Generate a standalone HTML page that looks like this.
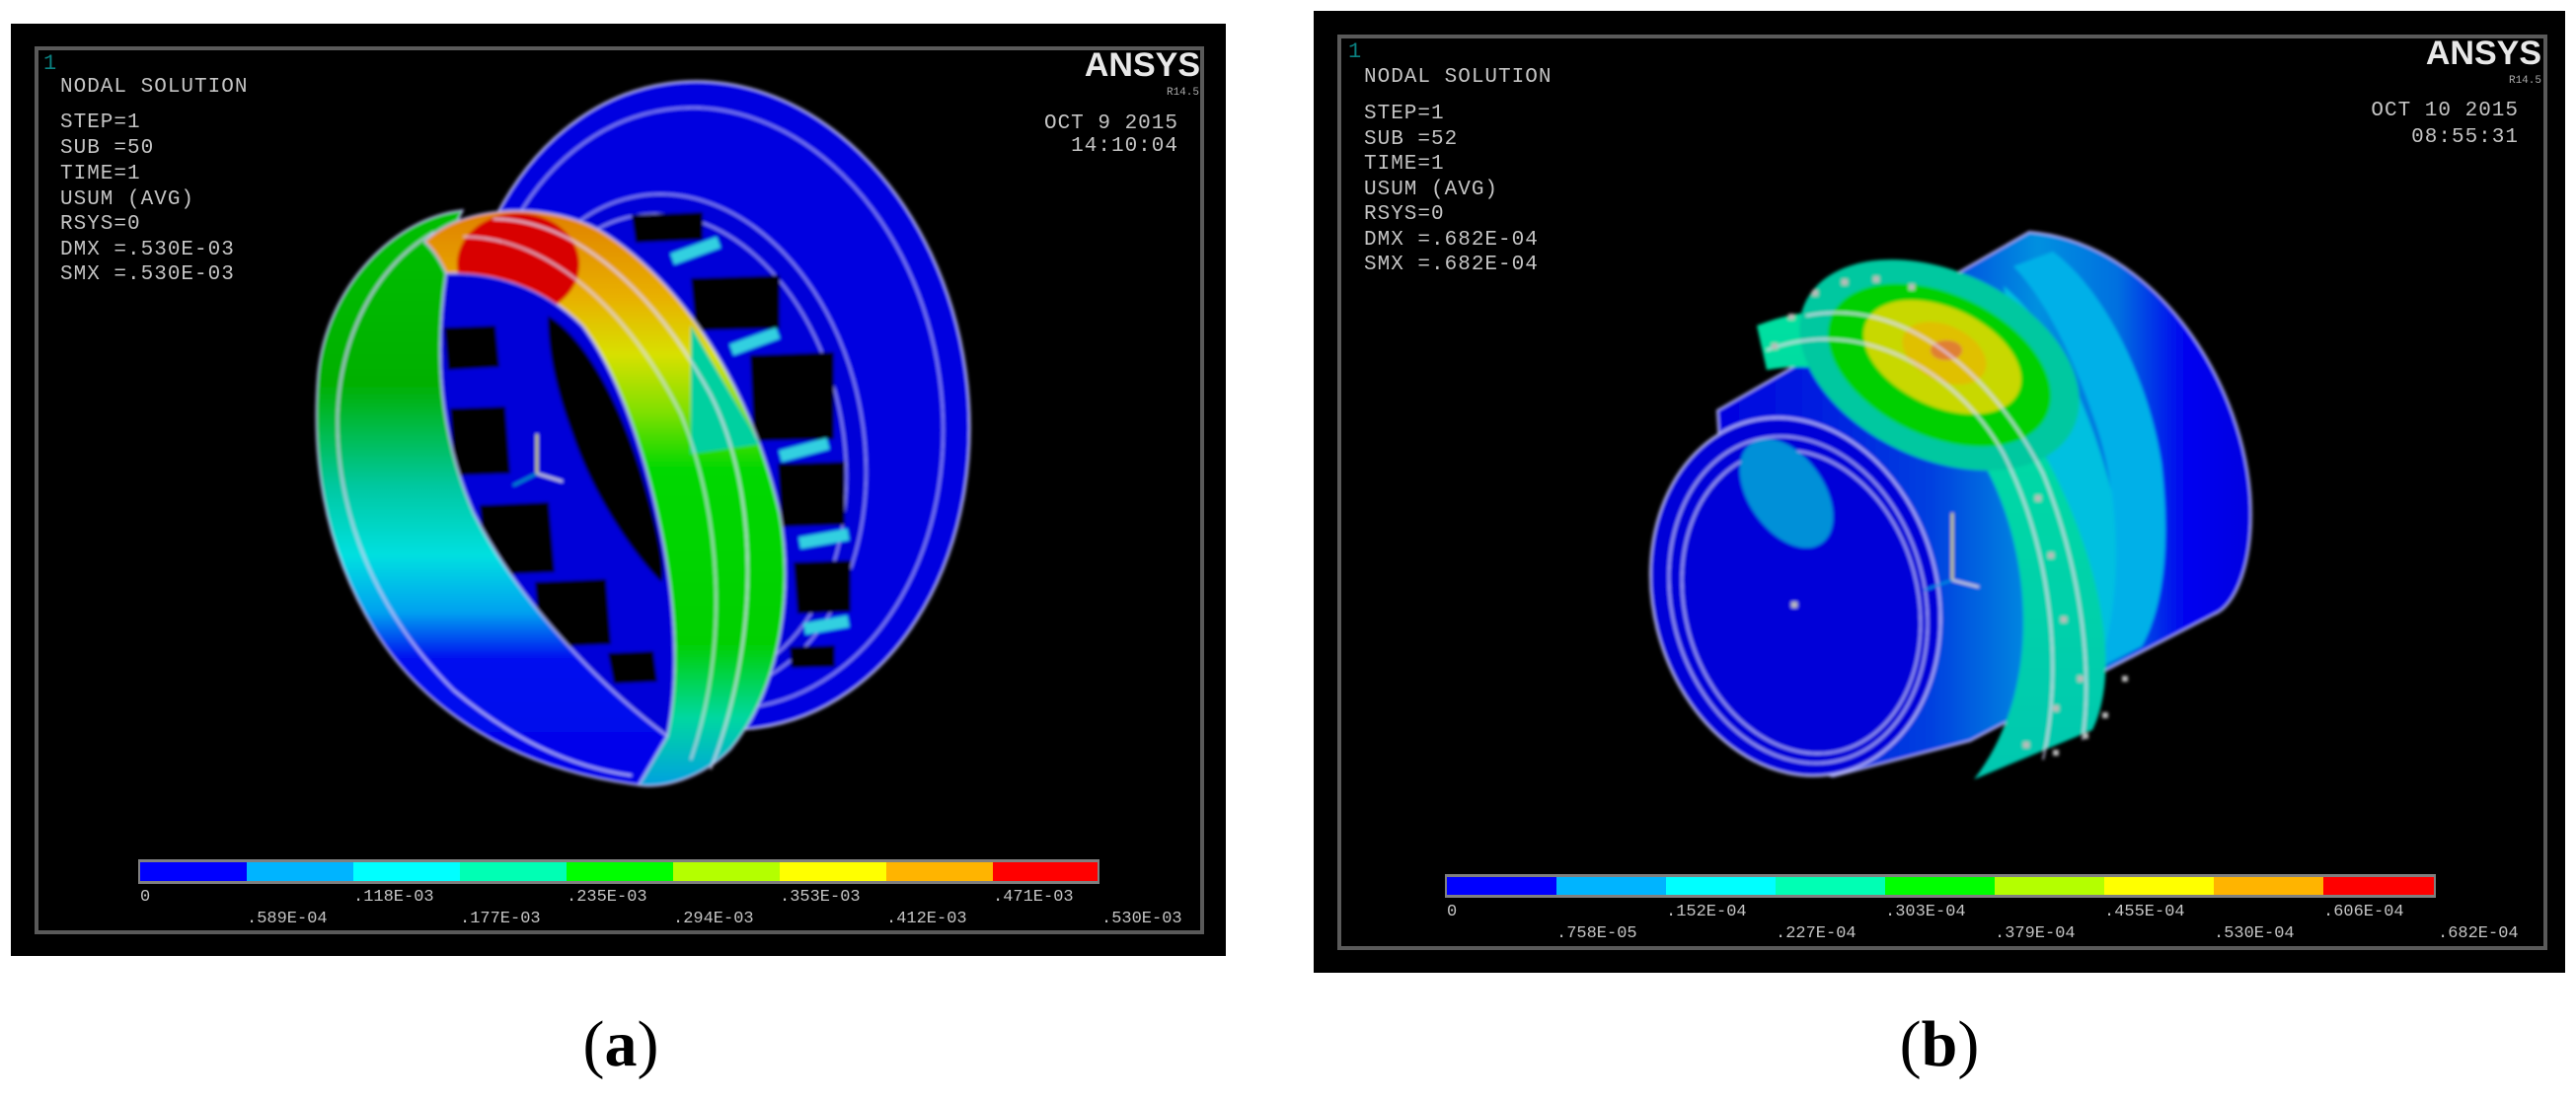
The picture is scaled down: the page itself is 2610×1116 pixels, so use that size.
<!DOCTYPE html>
<html><head><meta charset="utf-8">
<style>
html,body{margin:0;padding:0;background:#fff;}
body{width:2610px;height:1116px;overflow:hidden;position:relative;}
svg{position:absolute;left:0;top:0;}
.t{font-family:"Liberation Mono",monospace;font-size:21px;fill:#c4c4c4;letter-spacing:1px;}
.s{font-family:"Liberation Mono",monospace;font-size:17px;fill:#c4c4c4;}
.an{font-family:"Liberation Sans",sans-serif;font-weight:bold;font-size:34px;fill:#e8e8e8;}
.lab{font-family:"Liberation Serif",serif;font-size:66px;fill:#000;}
</style></head><body>
<svg width="2610" height="1116" viewBox="0 0 2610 1116" xmlns="http://www.w3.org/2000/svg">
<defs>
<filter id="bl"><feGaussianBlur stdDeviation="1.5"/></filter>
<linearGradient id="leftg" x1="0" y1="0" x2="0" y2="1">
<stop offset="0" stop-color="#00c000"/><stop offset="0.3" stop-color="#00b000"/>
<stop offset="0.48" stop-color="#00c8a0"/><stop offset="0.6" stop-color="#00e0e0"/>
<stop offset="0.7" stop-color="#00a0f0"/><stop offset="0.78" stop-color="#0010f0"/><stop offset="1" stop-color="#0000e8"/>
</linearGradient>
<linearGradient id="bandg" x1="0" y1="0" x2="0" y2="1">
<stop offset="0" stop-color="#e08000"/><stop offset="0.15" stop-color="#e8b000"/>
<stop offset="0.25" stop-color="#d8e000"/><stop offset="0.35" stop-color="#80e000"/>
<stop offset="0.45" stop-color="#00d800"/><stop offset="0.75" stop-color="#00d000"/>
<stop offset="0.88" stop-color="#00d8a0"/><stop offset="1" stop-color="#00a0e0"/>
</linearGradient>
<clipPath id="bandclip"><path d="M430,245 C470,205 560,205 610,235 C690,285 760,390 790,520 C805,600 790,700 740,760 C710,790 670,800 647,796 L676,746 C690,680 682,600 670,540 C650,440 620,370 590,330 C550,290 500,275 452,277 Z"/></clipPath>
<linearGradient id="bodyb" x1="0" y1="0" x2="1" y2="0">
<stop offset="0" stop-color="#0000e0"/><stop offset="0.4" stop-color="#0040e0"/>
<stop offset="0.6" stop-color="#0090e0"/><stop offset="0.75" stop-color="#0070e0"/>
<stop offset="0.88" stop-color="#0000f0"/><stop offset="1" stop-color="#0000e0"/>
</linearGradient>
<linearGradient id="ringb" x1="0" y1="0" x2="0" y2="1">
<stop offset="0" stop-color="#00e0a0"/><stop offset="1" stop-color="#00c8b0"/>
</linearGradient>
</defs>

<!-- Panel A -->
<rect x="11" y="24" width="1231" height="945" fill="#000"/>
<rect x="37" y="49" width="1181" height="896" fill="none" stroke="#5a5a5a" stroke-width="4"/>
<text x="44" y="70" style="font-family:'Liberation Mono',monospace;font-size:22px;fill:#0a8080">1</text>
<text class="t" x="61" y="93">NODAL SOLUTION</text>
<text class="t" x="61" y="129">STEP=1</text>
<text class="t" x="61" y="155">SUB =50</text>
<text class="t" x="61" y="181">TIME=1</text>
<text class="t" x="61" y="207">USUM     (AVG)</text>
<text class="t" x="61" y="232">RSYS=0</text>
<text class="t" x="61" y="258">DMX =.530E-03</text>
<text class="t" x="61" y="283">SMX =.530E-03</text>
<text class="an" x="1216" y="77" text-anchor="end">ANSYS</text>
<text x="1215" y="96" text-anchor="end" style="font-family:'Liberation Mono',monospace;font-size:11px;fill:#aaa">R14.5</text>
<text class="t" x="1194" y="130" text-anchor="end">OCT  9 2015</text>
<text class="t" x="1194" y="153" text-anchor="end">14:10:04</text>

<g filter="url(#bl)">
<ellipse cx="723" cy="411" rx="258" ry="330" transform="rotate(-8 723 411)" fill="#0000e0" stroke="#b8b8ff" stroke-width="2"/>
<ellipse cx="718" cy="414" rx="236" ry="306" transform="rotate(-8 718 414)" fill="none" stroke="#a0a0ff" stroke-width="1.5"/>
<ellipse cx="690" cy="450" rx="185" ry="255" transform="rotate(-10 690 450)" fill="#0000d8" stroke="#a0a0ff" stroke-width="1.5"/>
<ellipse cx="685" cy="455" rx="170" ry="240" transform="rotate(-10 685 455)" fill="none" stroke="#a0a0ff" stroke-width="1.5"/>
<g fill="#000">
<polygon points="640,218 712,215 712,243 644,246"/>
<polygon points="700,282 790,279 790,333 705,335"/>
<polygon points="760,360 845,357 845,445 764,447"/>
<polygon points="788,470 856,468 856,532 792,534"/>
<polygon points="804,570 862,568 862,620 808,622"/>
<polygon points="800,656 846,654 846,676 802,677"/>
</g>
<g fill="#30d0e0">
<rect x="680" y="248" width="50" height="12" transform="rotate(-20 705 255)"/>
<rect x="740" y="340" width="50" height="12" transform="rotate(-20 765 347)"/>
<rect x="790" y="450" width="50" height="12" transform="rotate(-15 815 457)"/>
<rect x="810" y="540" width="50" height="12" transform="rotate(-10 835 547)"/>
<rect x="815" y="628" width="45" height="12" transform="rotate(-10 835 635)"/>
</g>
<path d="M452,277 C500,275 550,290 590,330 C620,370 650,440 670,540 C682,600 690,680 676,746 C600,690 520,600 480,520 C445,440 440,360 452,277 Z" fill="#0000d8"/>
<path d="M555,320 C590,340 625,400 650,480 C668,540 675,580 670,590 C640,560 600,500 580,440 C565,400 555,360 555,320 Z" fill="#000"/>
<g fill="#000">
<polygon points="450,332 502,330 506,372 454,375"/>
<polygon points="456,414 512,412 517,480 461,482"/>
<polygon points="486,512 556,509 562,580 493,583"/>
<polygon points="542,590 614,587 619,653 548,656"/>
<polygon points="616,662 662,660 666,691 622,693"/>
</g>
<path d="M469,213 C400,220 330,290 322,380 C315,470 330,560 380,640 C430,720 520,780 647,796 L676,746 C600,690 520,600 480,520 C445,440 440,360 452,277 C455,250 460,230 469,213 Z" fill="url(#leftg)" stroke="#c0c0ff" stroke-width="1.5"/>
<path d="M440,235 C380,270 345,340 342,420 C340,520 380,620 460,700 C520,750 580,778 640,786" fill="none" stroke="#d0d0ff" stroke-width="1.5"/>
<path d="M430,245 C470,205 560,205 610,235 C690,285 760,390 790,520 C805,600 790,700 740,760 C710,790 670,800 647,796 L676,746 C690,680 682,600 670,540 C650,440 620,370 590,330 C550,290 500,275 452,277 C445,262 438,252 430,245 Z" fill="url(#bandg)" stroke="#c0c0ff" stroke-width="1.5"/>
<g clip-path="url(#bandclip)">
<ellipse cx="525" cy="268" rx="62" ry="52" fill="#d80000"/>
<path d="M700,330 L770,450 L700,460 Z" fill="#00d0a0"/>
</g>
<path d="M500,222 C580,222 660,290 720,400 C770,500 770,650 720,780" fill="none" stroke="#e0e0ff" stroke-width="1.5"/>
<path d="M470,240 C560,240 640,320 690,420 C730,520 740,650 700,770" fill="none" stroke="#e0e0ff" stroke-width="1.2"/>
<line x1="544" y1="480" x2="544" y2="440" stroke="#e0e000" stroke-width="2"/>
<line x1="544" y1="480" x2="570" y2="488" stroke="#ddd" stroke-width="2"/>
<line x1="544" y1="480" x2="520" y2="492" stroke="#00a0c0" stroke-width="2"/>
</g>

<rect x="140" y="871" width="974" height="25" fill="#808080"/>
<rect x="142" y="874" width="108" height="19" fill="#0000ff"/>
<rect x="250" y="874" width="108" height="19" fill="#00b4ff"/>
<rect x="358" y="874" width="108" height="19" fill="#00ffff"/>
<rect x="466" y="874" width="108" height="19" fill="#00ffb4"/>
<rect x="574" y="874" width="108" height="19" fill="#00ff00"/>
<rect x="682" y="874" width="108" height="19" fill="#b4ff00"/>
<rect x="790" y="874" width="108" height="19" fill="#ffff00"/>
<rect x="898" y="874" width="108" height="19" fill="#ffb400"/>
<rect x="1006" y="874" width="106" height="19" fill="#ff0000"/>
<text class="s" x="142" y="913">0</text>
<text class="s" x="250" y="935">.589E-04</text>
<text class="s" x="358" y="913">.118E-03</text>
<text class="s" x="466" y="935">.177E-03</text>
<text class="s" x="574" y="913">.235E-03</text>
<text class="s" x="682" y="935">.294E-03</text>
<text class="s" x="790" y="913">.353E-03</text>
<text class="s" x="898" y="935">.412E-03</text>
<text class="s" x="1006" y="913">.471E-03</text>
<text class="s" x="1116" y="935">.530E-03</text>

<!-- Panel B -->
<rect x="1331" y="11" width="1268" height="975" fill="#000"/>
<rect x="1357" y="37" width="1222" height="924" fill="none" stroke="#5a5a5a" stroke-width="4"/>
<text x="1366" y="58" style="font-family:'Liberation Mono',monospace;font-size:22px;fill:#0a8080">1</text>
<text class="t" x="1382" y="83">NODAL SOLUTION</text>
<text class="t" x="1382" y="120">STEP=1</text>
<text class="t" x="1382" y="146">SUB =52</text>
<text class="t" x="1382" y="171">TIME=1</text>
<text class="t" x="1382" y="197">USUM     (AVG)</text>
<text class="t" x="1382" y="222">RSYS=0</text>
<text class="t" x="1382" y="248">DMX =.682E-04</text>
<text class="t" x="1382" y="273">SMX =.682E-04</text>
<text class="an" x="2575" y="65" text-anchor="end">ANSYS</text>
<text x="2575" y="84" text-anchor="end" style="font-family:'Liberation Mono',monospace;font-size:11px;fill:#aaa">R14.5</text>
<text class="t" x="2552" y="117" text-anchor="end">OCT 10 2015</text>
<text class="t" x="2552" y="144" text-anchor="end">08:55:31</text>

<g filter="url(#bl)">
<path d="M1740,416 L2056,235 C2180,245 2270,380 2280,500 C2285,570 2265,615 2243,623 L1996,751 L1857,787 L1760,760 Z" fill="url(#bodyb)" stroke="#b0b0ff" stroke-width="2"/>
<path d="M2080,255 C2140,300 2180,400 2190,470 C2200,560 2190,620 2170,655 L2120,680 C2150,600 2150,500 2120,420 C2100,360 2070,300 2040,270 Z" fill="#00b0e8"/>
<path d="M2030,290 C2080,330 2120,420 2140,500 C2150,580 2140,650 2120,690 L2080,700 C2100,600 2090,500 2060,420 Z" fill="#00c0e0"/>
<path d="M1780,330 C1880,290 1990,330 2060,440 C2130,560 2150,680 2120,740 L2000,790 C2070,700 2060,560 2010,470 C1960,400 1870,360 1790,375 Z" fill="url(#ringb)"/>
<ellipse cx="1965" cy="370" rx="150" ry="95" transform="rotate(25 1965 370)" fill="#00c8a0"/>
<ellipse cx="1965" cy="370" rx="120" ry="72" transform="rotate(25 1965 370)" fill="#00d000"/>
<ellipse cx="1968" cy="362" rx="85" ry="50" transform="rotate(25 1968 362)" fill="#c8d800"/>
<ellipse cx="1970" cy="358" rx="45" ry="28" transform="rotate(25 1970 358)" fill="#e0c000"/>
<ellipse cx="1972" cy="355" rx="16" ry="10" fill="#e08030"/>
<path d="M1790,355 C1880,320 1980,370 2030,460 C2080,560 2090,680 2070,770" fill="none" stroke="#e0e0ff" stroke-width="1.5"/>
<path d="M1830,320 C1930,300 2020,380 2070,480 C2110,580 2120,680 2110,750" fill="none" stroke="#e0e0ff" stroke-width="1.5"/>
<ellipse cx="1819" cy="605" rx="144" ry="184" transform="rotate(-15 1819 605)" fill="#0000d8" stroke="#c0c0ff" stroke-width="2"/>
<ellipse cx="1822" cy="608" rx="128" ry="168" transform="rotate(-15 1822 608)" fill="none" stroke="#c0c0ff" stroke-width="1.5"/>
<ellipse cx="1825" cy="610" rx="118" ry="156" transform="rotate(-15 1825 610)" fill="none" stroke="#c0c0ff" stroke-width="1.5"/>
<ellipse cx="1810" cy="500" rx="38" ry="62" transform="rotate(-35 1810 500)" fill="#0090d8"/>
<line x1="1978" y1="588" x2="1978" y2="520" stroke="#e0e000" stroke-width="2"/>
<line x1="1978" y1="588" x2="2005" y2="595" stroke="#ddd" stroke-width="2"/>
<line x1="1978" y1="588" x2="1950" y2="598" stroke="#0090e0" stroke-width="2"/>
<g fill="#bbb">
<rect x="1795" y="348" width="6" height="6"/><rect x="1812" y="318" width="6" height="6"/>
<rect x="1836" y="294" width="6" height="6"/><rect x="1866" y="283" width="6" height="6"/>
<rect x="1898" y="280" width="6" height="6"/><rect x="1934" y="288" width="6" height="6"/>
<rect x="1815" y="610" width="6" height="6"/>
<rect x="2062" y="502" width="6" height="6"/><rect x="2075" y="560" width="6" height="6"/>
<rect x="2088" y="625" width="6" height="6"/><rect x="2105" y="685" width="6" height="6"/>
<rect x="2150" y="685" width="6" height="6"/><rect x="2130" y="722" width="6" height="6"/>
<rect x="2110" y="743" width="6" height="6"/><rect x="2080" y="760" width="6" height="6"/>
<rect x="2050" y="752" width="6" height="6"/><rect x="2080" y="715" width="6" height="6"/>
</g>
</g>

<rect x="1464" y="886" width="1004" height="24" fill="#808080"/>
<rect x="1466" y="889" width="111" height="18" fill="#0000ff"/>
<rect x="1577" y="889" width="111" height="18" fill="#00b4ff"/>
<rect x="1688" y="889" width="111" height="18" fill="#00ffff"/>
<rect x="1799" y="889" width="111" height="18" fill="#00ffb4"/>
<rect x="1910" y="889" width="111" height="18" fill="#00ff00"/>
<rect x="2021" y="889" width="111" height="18" fill="#b4ff00"/>
<rect x="2132" y="889" width="111" height="18" fill="#ffff00"/>
<rect x="2243" y="889" width="111" height="18" fill="#ffb400"/>
<rect x="2354" y="889" width="112" height="18" fill="#ff0000"/>
<text class="s" x="1466" y="928">0</text>
<text class="s" x="1577" y="950">.758E-05</text>
<text class="s" x="1688" y="928">.152E-04</text>
<text class="s" x="1799" y="950">.227E-04</text>
<text class="s" x="1910" y="928">.303E-04</text>
<text class="s" x="2021" y="950">.379E-04</text>
<text class="s" x="2132" y="928">.455E-04</text>
<text class="s" x="2243" y="950">.530E-04</text>
<text class="s" x="2354" y="928">.606E-04</text>
<text class="s" x="2470" y="950">.682E-04</text>

<text class="lab" x="629" y="1080" text-anchor="middle">(<tspan font-weight="bold">a</tspan>)</text>
<text class="lab" x="1965" y="1080" text-anchor="middle">(<tspan font-weight="bold">b</tspan>)</text>
</svg>
</body></html>
